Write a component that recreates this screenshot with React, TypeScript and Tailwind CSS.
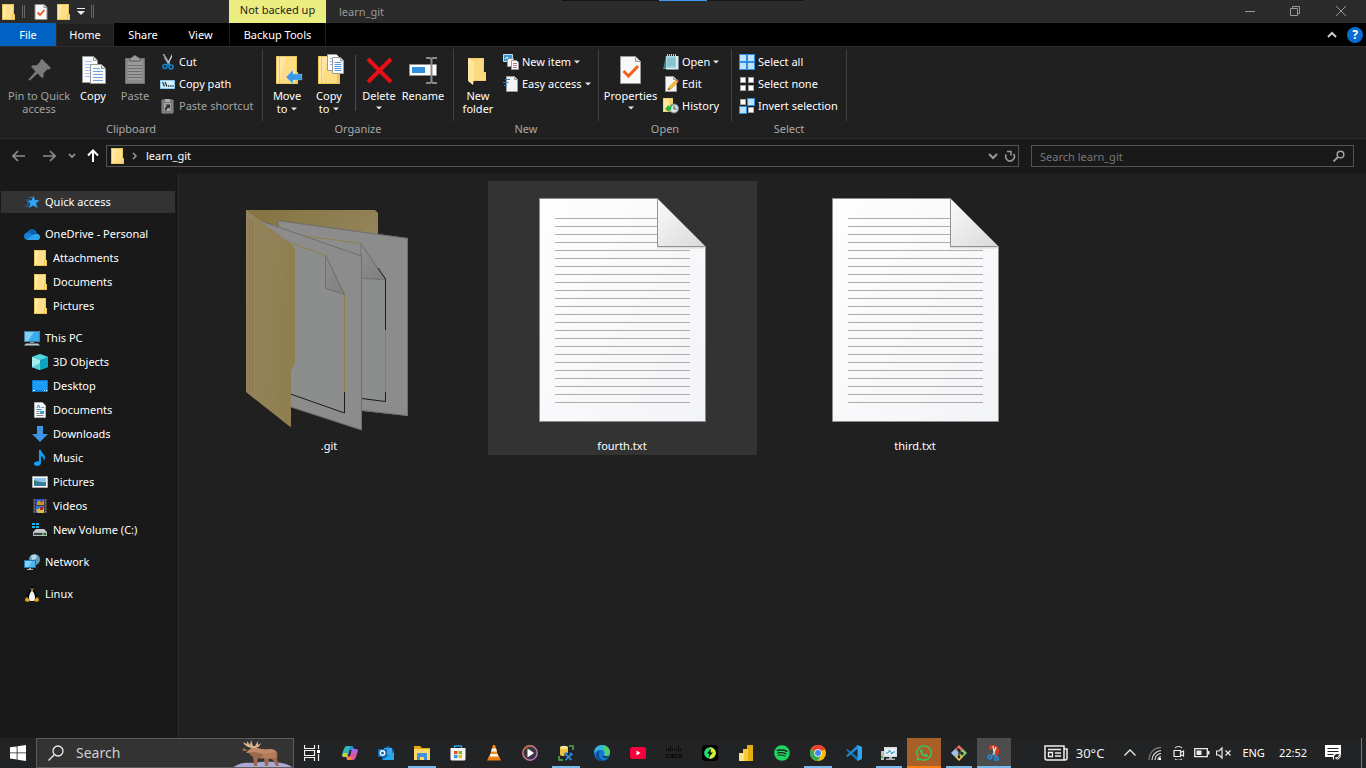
import React from 'react';
import { FaSpotify, FaWhatsapp } from 'react-icons/fa';

type IconProps = { className?: string };
type P = { children?: React.ReactNode; size?: number; box?: string; className?: string };

function Svg({ children, size = 16, box, className = '' }: P) {
  return (
    <svg width={size} height={size} viewBox={box ?? `0 0 ${size} ${size}`} className={`block shrink-0 ${className}`} aria-hidden="true">
      {children}
    </svg>
  );
}

/* ---------- small 16px icons ---------- */

const FolderIcon = ({ className }: IconProps) => (
  <Svg className={className}>
    <path d="M2 0h12v10h1v6H2z" fill="#eac65a" />
    <path d="M3 1h10v9l-1 1v4H3z" fill="#ffe08a" />
    <path d="M3 1h4L4 15H3z" fill="#ffe9a8" />
    <path d="M13 11h1v4h-1z" fill="#ffe08a" />
  </Svg>
);

const CheckDoc = () => (
  <Svg>
    <path d="M2 .5h9l3 3v12H2z" fill="#f7f7f7" stroke="#8f8f8f" />
    <path d="M11 .5v3h3" fill="#ddd" stroke="#8f8f8f" />
    <path d="M4.500 8.500l2.500 2.500 4.500-5" fill="none" stroke="#e8561d" strokeWidth="1.800" />
  </Svg>
);

const CutIcon = () => (
  <Svg>
    <path d="M3 0l1 0 6 10-1.500 1zM4 4l5 6" fill="#a8b0b6" stroke="#a8b0b6" strokeWidth=".6" />
    <path d="M12 0L7 10l1 1 4-8z" fill="#d6dade" />
    <circle cx="5" cy="12.500" r="2" fill="none" stroke="#1487d4" strokeWidth="1.500" />
    <circle cx="11" cy="13" r="2" fill="none" stroke="#1487d4" strokeWidth="1.500" />
    <path d="M6.500 11L8 9.500l2 2" fill="none" stroke="#1487d4" strokeWidth="1.300" />
  </Svg>
);

const PathIcon = () => (
  <Svg>
    <path d="M.5 4.500h14v8H.5z" fill="#d5eefb" stroke="#8fc8ea" />
    <path d="M2.500 6l2 4.500M5 6l2 4.500" stroke="#15313f" strokeWidth="1.200" />
    <path d="M8 10h1.300M10.200 10h1.300M12.400 10h1.200" stroke="#15313f" strokeWidth="1.400" />
  </Svg>
);

const PasteShortcutIcon = () => (
  <Svg>
    <path d="M2 2h11v13H2z" fill="#777" stroke="#8d8d8d" />
    <path d="M5 1h5v3H5z" fill="#aaa" />
    <path d="M4 5h7v8H4z" fill="#a5a5a5" />
    <path d="M5 12.500c-.5-2 .5-4 2-4.500L5.500 6.500H10V11L8.500 9.500C7 10 6.500 11 6.500 12.500z" fill="#2a2a2a" />
  </Svg>
);

const NewItemIcon = () => (
  <Svg>
    <path d="M.5.500h9v7h-9z" fill="#3d9ad1" stroke="#b5dff4" />
    <path d="M2 5l2-2 3 3" fill="none" stroke="#dff" />
    <path d="M4.500 4.500h6v8h-6z" fill="#f5f5f5" stroke="#9a9a9a" />
    <path d="M8.500 6.500h5l2 2v7h-7z" fill="#fff" stroke="#9a9a9a" />
    <path d="M10 9.500h4M10 11.500h4M10 13.500h4" stroke="#e36a7a" />
    <path d="M12 9.500h2M12 13.500h2" stroke="#5794d8" />
  </Svg>
);

const EasyAccessIcon = () => (
  <Svg>
    <path d="M3.500.500h8l3 3v12h-11z" fill="#f4f4f4" stroke="#9a9a9a" />
    <path d="M11.500.500v3h3" fill="#ccc" stroke="#9a9a9a" />
    <path d="M2 3.500h5M0 6.500h5.500M1 9.500h3" stroke="#2383cf" strokeWidth="1.200" />
  </Svg>
);

const NotepadIcon = () => (
  <Svg>
    <path d="M3 2h12v12H2z" fill="#9fd3df" />
    <path d="M3 2L0 15h3z" fill="#3f7f8c" />
    <path d="M13 2h2.500v13.500h-12L2 14h11z" fill="#d9eef2" />
    <path d="M4.500 5h8M4.300 7h8M4 9h8.500M4 11h8.500" stroke="#6fb1bf" />
    <path d="M4.500 0v3M6.500 0v3M8.500 0v3M10.500 0v3M12.500 0v3" stroke="#c8d4d6" />
  </Svg>
);

const EditIcon = () => (
  <Svg>
    <path d="M2.500.500h8l3 3v12h-11z" fill="#f4f4f4" stroke="#9a9a9a" />
    <path d="M10.500.500v3h3" fill="#ccc" stroke="#9a9a9a" />
    <path d="M5 14l1-3 7-7 2 2-7 7z" fill="#f5bd35" stroke="#c98a18" strokeWidth=".5" />
    <path d="M13 4l1-1 2 2-1 1z" fill="#e0566a" />
    <path d="M5 14l.8-2 1.300 1.200z" fill="#333" />
  </Svg>
);

const HistoryIcon = () => (
  <Svg>
    <path d="M0 0h10v14H0z" fill="#f3d36a" />
    <path d="M1 1h5v12H1z" fill="#ffe79a" />
    <circle cx="11" cy="10.500" r="4.500" fill="#dadfe2" stroke="#7b8489" />
    <path d="M11 7.500v3.500h2.500" fill="none" stroke="#555" />
    <path d="M2 11l3.500-4 1 2.500c1-2 2-3 4-3-2 1.500-2.500 3-2.500 5.500l-2 0 1 2.500z" fill="#27b03e" />
  </Svg>
);

type Cell = 'on' | 'off';
const SelectGrid = ({ cells, filled }: { cells: Cell[]; filled?: boolean }) => (
  <Svg>
    {filled && <path d="M0 0h16v16H0z" fill="#2f8fe0" />}
    {cells.map((c, i) => {
      const x = (i % 2) * 8;
      const y = Math.floor(i / 2) * 8;
      return c === 'on' ? (
        <g key={i}>
          <rect x={x} y={y} width="8" height="8" fill="#2f8fe0" />
          <rect x={x + 1} y={y + 1} width="6" height="6" fill="#bfe3fb" />
        </g>
      ) : (
        <g key={i}>
          <rect x={x + 1} y={y + 1} width="6" height="6" fill="#a5a5a5" />
          <rect x={x + 2} y={y + 2} width="4" height="4" fill="#fff" />
        </g>
      );
    })}
  </Svg>
);

/* ---------- 32px ribbon icons ---------- */

const PinBig = () => (
  <Svg size={32}>
    <path d="M19 5l9 9-2 1.500-1.500-.3-4 4c.5 2.200 0 4-1.200 5l-4.800-4.700L7 26.500l-1.500-.5 0-.5 7-8L8 12.500c1.500-1.300 3.500-1.500 5.500-1l4-4-.5-1z" fill="#7a7a7a" />
  </Svg>
);

const page = (x: number, y: number) => (
  <g transform={`translate(${x} ${y})`}>
    <path d="M.5.500h11l4 4v15H.5z" fill="#fbfbfb" stroke="#9a9a9a" />
    <path d="M11.500.500v4h4" fill="#ddd" stroke="#9a9a9a" />
    <path d="M3 4.500h7M3 7.500h10M3 10.500h10M3 13.500h10M3 16.500h10" stroke="#6ea4ea" />
  </g>
);

const CopyBig = () => (
  <Svg size={32}>
    <g transform="translate(5 2)">
      <path d="M.5.500h11l4 4v22H.5z" fill="#fbfbfb" stroke="#9a9a9a" />
      <path d="M11.500.500v4h4" fill="#ddd" stroke="#9a9a9a" />
      <path d="M3 5.500h7M3 8.500h10M3 11.500h5M3 14.500h5M3 17.500h5M3 20.500h5" stroke="#a5c6f2" />
    </g>
    {page(13, 10)}
  </Svg>
);

const PasteBig = () => (
  <Svg size={32}>
    <path d="M6.500 4.500h19v25h-19z" fill="#8a8a8a" stroke="#707070" />
    <path d="M11 5c0-2 3-1 4-3.500h2c1 2.500 4 1.500 4 3.500v2H11z" fill="#9c9c9c" stroke="#606060" />
    <path d="M9 8h14v18H9z" fill="#9a9a9a" />
    <path d="M9 11.500h14M9 14.500h14M9 17.500h14M9 20.500h14M9 23.500h14" stroke="#6f6f6f" />
  </Svg>
);

const FolderShape = () => (
  <>
    <path d="M5 2h21v16h1v12H5z" fill="#eac65a" />
    <path d="M6 3h19v26H6z" fill="#fddc84" />
    <path d="M6 3h9L8 29H6z" fill="#ffe7a3" />
    <path d="M8.500 3v26M24.500 19v10" stroke="#eec963" />
  </>
);

const MoveBig = () => (
  <Svg size={32}>
    <FolderShape />
    <path d="M15 23l7-7v4h9v6h-9v4z" fill="#3a99e8" stroke="#fff" strokeOpacity=".4" strokeWidth=".5" />
  </Svg>
);

const CopyToBig = () => (
  <Svg size={32}>
    <FolderShape />
    <g transform="translate(14 0)">
      <path d="M.5.500h9l3 3v13H.5z" fill="#fbfbfb" stroke="#9a9a9a" />
      <path d="M3 4.500h6M3 7.500h7M3 10.500h7" stroke="#8ab6ee" />
    </g>
    <g transform="translate(19 3)">
      <path d="M.5.500h8l3 3v13H.5z" fill="#fbfbfb" stroke="#9a9a9a" />
      <path d="M8.500.500v3h3" fill="#ddd" stroke="#9a9a9a" />
      <path d="M2.500 5.500h7M2.500 7.500h7M2.500 9.500h7M2.500 11.500h7M2.500 13.500h7" stroke="#5b97e3" />
    </g>
  </Svg>
);

const DeleteBig = () => (
  <Svg size={32}>
    <path d="M5 5l23 23M28 5L5 28" stroke="#e60f17" strokeWidth="4" />
  </Svg>
);

const RenameBig = () => (
  <Svg size={32}>
    <path d="M2.500 10.500h27v11h-27z" fill="#fff" stroke="#8f8f8f" />
    <path d="M5 13h13v6H5z" fill="#2f8fe0" />
    <path d="M19 4h4l1.500 1L26 4h4M24.500 5v23M19 29h4l1.500-1L26 29h4" fill="none" stroke="#8a8a8a" strokeWidth="2" />
  </Svg>
);

const NewFolderBig = () => (
  <Svg size={32}>
    <path d="M6 4h16v14h2v9H6z" fill="#f4cd6c" />
    <path d="M6 4l6 3v17l-1 7-5-4z" fill="#ffe6a0" />
    <path d="M12 5h9v13l3 2v6H12z" fill="#fbd97f" />
  </Svg>
);

const PropertiesBig = () => (
  <Svg size={32}>
    <path d="M5.500 2.500h15l5 5v22h-20z" fill="#f8f8f8" stroke="#9a9a9a" />
    <path d="M20.500 2.500v5h5" fill="#ddd" stroke="#9a9a9a" />
    <path d="M8.500 17l5 5 9.500-10" fill="none" stroke="#f0601e" strokeWidth="3" />
  </Svg>
);

/* ---------- navigation icons ---------- */

const StarIcon = () => (
  <Svg>
    <path d="M9.500 1.500L11 6l4.500.2-3.500 3 1.500 4.800-4.500-2.500L5 14l1.300-4.700L3 7l4.500-.8z" fill="#2fa4f5" />
    <path d="M5 3.500h3M2.500 6h3M3 9.500h2M1.500 12h3.500" stroke="#1679c8" strokeWidth="1.200" />
  </Svg>
);
const CloudIcon = () => (
  <Svg>
    <path d="M3 7c1-3 3-4 5-4s4 1 5 4l-5 3z" fill="#0f5fb4" />
    <path d="M0 10c0-2 2-4 4.500-3.500L12 10l-6 4H4c-2 0-4-1-4-4z" fill="#1780d8" />
    <path d="M3 13l8-5c3-1 5 .5 5 3s-1.500 3-3 3H4z" fill="#2aa6ec" />
  </Svg>
);
const PcIcon = () => (
  <Svg>
    <path d="M0 1h16v11H0z" fill="#4b7d9b" />
    <path d="M1 2h14v9H1z" fill="#3bacee" />
    <path d="M1 2h9L4 11H1z" fill="#7fd0f8" />
    <path d="M6 12h4v1H6z" fill="#7b95a3" />
    <path d="M2 13.500h12l2 2H0z" fill="#b9cdd8" />
  </Svg>
);
const CubeIcon = () => (
  <Svg>
    <path d="M0 3l8-3 8 3v10l-8 3-8-3z" fill="#20b8cf" />
    <path d="M0 3l8 3v10l-8-3z" fill="#a5ecef" />
    <path d="M8 6l8-3v10l-8 3z" fill="#10a4c2" />
    <path d="M0 3l8-3 8 3-8 3z" fill="#56d2dd" />
    <path d="M0 13l8-4v7z" fill="#53cfd8" />
  </Svg>
);
const DesktopIcon = () => (
  <Svg>
    <path d="M0 2h16v12H0z" fill="#0a79cf" />
    <path d="M1 3h14v9H1z" fill="#1b9df5" />
    <path d="M1 12.500h2M12 12.500h1M14 12.500h1" stroke="#fff" />
  </Svg>
);
const DocIcon = () => (
  <Svg>
    <path d="M2.500.500h8l3 3v12h-11z" fill="#f8f8f8" stroke="#b0b0b0" />
    <path d="M5 6l1.500-3L8 6M4.500 7.500h5" fill="none" stroke="#2686cf" />
    <path d="M9.500 5.500h2.500M4.500 9.500h3M4.500 11.500h3M4.500 13.500h7" stroke="#888" />
    <path d="M8 9h4v3H8z" fill="#3f9cc5" />
  </Svg>
);
const DownIcon = () => (
  <Svg>
    <path d="M5 0h6v8h5l-8 8-8-8h5z" fill="#3d94e4" />
  </Svg>
);
const MusicIcon = () => (
  <Svg>
    <path d="M7 0h2c0 3 4 4 4 8 0 1-.5 2-1.500 3 .5-3-.5-4-2.500-5v6.500C9 15 7 16 5 16c-2 0-3-1-3-2.500C2 12 4 11 7 11.300z" fill="#12a0f7" />
  </Svg>
);
const PictureIcon = () => (
  <Svg>
    <path d="M.5 2.500h15v11H.5z" fill="#fff" stroke="#aaa" />
    <path d="M2 4h12v8H2z" fill="#8dc3ee" />
    <path d="M2 6c4 1 6 3 12 2v4H2z" fill="#3a7e72" />
    <path d="M2 10c4-1 8-1 12 0v2H2z" fill="#3578ac" />
  </Svg>
);
const VideoIcon = () => (
  <Svg>
    <path d="M1 1h14v14H1z" fill="#3d3d3d" />
    <path d="M2.500 1v14M13.500 1v14" stroke="#888" strokeDasharray="1.500 1.500" />
    <path d="M4 1h8v6H4z" fill="#3154c4" />
    <path d="M5 4l3-2 1 3 3-3v5H5z" fill="#d59420" />
    <path d="M4 8h8v7H4z" fill="#3b78e0" />
    <path d="M4 12l4-2 4 1v4H6z" fill="#e4b93d" />
    <path d="M8 9h3v3H8z" fill="#a52a2a" />
  </Svg>
);
const DriveIcon = () => (
  <Svg>
    <path d="M0 1h3v2H0zM4 1h3v2H4zM0 4h3v2H0zM4 4h3v2H4z" fill="#14b2ea" />
    <path d="M4 7h8l3 3v4H1v-4z" fill="#c8ccce" />
    <path d="M1.500 10.500h13v3h-13z" fill="#3c4144" stroke="#b4b8ba" />
    <path d="M10 12h2.500" stroke="#35e04b" strokeWidth="1.500" />
  </Svg>
);
const NetworkIcon = () => (
  <Svg>
    <circle cx="10.500" cy="5.500" r="5.500" fill="#5f9dba" />
    <path d="M7 2c2-2 5-1 6 0l-1 3-4 1z" fill="#b4d8e6" />
    <path d="M0 6h12v8H0z" fill="#2476ae" />
    <path d="M1 7h10v6H1z" fill="#4db7f2" />
    <path d="M1 7h7l-4 6H1z" fill="#84d1f9" />
    <path d="M5 14h2v1h2v1H3v-1h2z" fill="#9bb5c2" />
  </Svg>
);
const LinuxIcon = () => (
  <Svg>
    <path d="M8 0c2 0 2.600 1.500 2.600 4 0 2 3.400 4 3.400 8 0 2-3 3.500-6 3.500S2 14 2 12c0-4 3.400-6 3.400-8C5.400 1.500 6 0 8 0z" fill="#050505" />
    <path d="M8 5c1.500 0 3 4 3 7s-1 3-3 3-3 0-3-3 1.500-7 3-7z" fill="#f5f5f5" />
    <path d="M6.500 3.800L8 3.200l1.800.6L8 5.300z" fill="#eab02a" />
    <path d="M3 11l3 3.500-1.500 1.500L1 15c0-2 .5-3 2-4zM13 11l-3 3.500 1.500 1.500 3.500-1c0-2-.5-3-2-4z" fill="#e0a11c" />
    <path d="M6.500 2.500h.8M8.700 2.500h.8" stroke="#ddd" />
  </Svg>
);

/* ---------- large file art ---------- */

const RULES = Array.from({ length: 24 }, (_, i) => 36.5 + i * 8);

const TextFileArt = () => (
  <Svg size={256}>
    <defs>
      <linearGradient id="sheet" x1="0" y1="0" x2="1" y2="1">
        <stop offset="0" stopColor="#fefefe" />
        <stop offset="1" stopColor="#f3f4f7" />
      </linearGradient>
      <linearGradient id="fold" x1="0" y1="0" x2="1" y2="1">
        <stop offset="0" stopColor="#fafafa" />
        <stop offset="1" stopColor="#d9d9d9" />
      </linearGradient>
    </defs>
    <path d="M45.500 16.500h118l48 48v175h-166z" fill="url(#sheet)" stroke="#8c8c8c" />
    {RULES.map((y, i) => (
      <path key={y} d={`M61 ${y}H${i < 4 ? 163 : 196}`} stroke="#ababab" />
    ))}
    <path d="M163 65.500h47" stroke="#dcdcdc" strokeWidth="2" />
    <path d="M163.500 16.500v48h48z" fill="url(#fold)" stroke="#929292" />
  </Svg>
);

const GitFolderArt = () => (
  <Svg size={256}>
    <defs>
      <linearGradient id="cover" x1="0" y1="0" x2="1" y2="0.300">
        <stop offset="0" stopColor="#94845f" />
        <stop offset="1" stopColor="#8f7f4e" />
      </linearGradient>
      <linearGradient id="back" x1="0" y1="0" x2="1" y2="0.400">
        <stop offset="0" stopColor="#84723f" />
        <stop offset="1" stopColor="#94845a" />
      </linearGradient>
      <linearGradient id="curl" x1="0" y1="0" x2="1" y2="1">
        <stop offset="0" stopColor="#8f8f8f" />
        <stop offset="1" stopColor="#7e7e7e" />
      </linearGradient>
    </defs>
    <path d="M45 28h129l3 3v50H45z" fill="url(#back)" />
    <path d="M77 39l130 17v178l-90-10z" fill="#8c8c8c" />
    <path d="M77 44v-5.500L206.500 56.500v177l-45-5" fill="none" stroke="#6d6d6d" />
    <path d="M108 55l52 6.500 24.500 35V219l-24-3z" fill="#8b8e8d" />
    <path d="M104 54l56 7.500 24 35" fill="none" stroke="#90804a" />
    <path d="M160 61.500v34.500l24.500 2z" fill="url(#curl)" stroke="#707070" />
    <path d="M177 86l7.500 11v51M184.500 210v9.500l-24-3" fill="none" stroke="#1b1b1b" />
    <path d="M184.500 148v62" stroke="#8f7f4e" />
    <path d="M60 39l100.500 35v174L90 225z" fill="#8c8c8c" />
    <path d="M60 39l100.500 35v174L90 225" fill="none" stroke="#6d6d6d" />
    <path d="M83 58l41.500 15 19 38v120L90 213z" fill="#8b8e8d" />
    <path d="M83 58.500l41.500 15 19 38v99" fill="none" stroke="#90804a" />
    <path d="M143.500 210v21l-54-19" fill="none" stroke="#1b1b1b" />
    <path d="M124.500 73.500v33l19 6z" fill="url(#curl)" stroke="#707070" />
    <path d="M45 28l45 34q4 3 4 8v111l-4 8v56l-2-1-43-34z" fill="url(#cover)" />
    <path d="M48.500 37v172M51.500 39v171" stroke="#8c7747" />
  </Svg>
);

/* ---------- building blocks ---------- */

const Caret = () => (
  <Svg size={6}>
    <path d="M0 1.500h6L3 4.500z" fill="#e6e6e6" />
  </Svg>
);

type BigProps = { icon: React.ReactNode; lines: string[]; width: string; caret?: boolean; muted?: boolean };

function BigButton({ icon, lines, width, caret, muted }: BigProps) {
  return (
    <button type="button" className={`flex shrink-0 flex-col items-center pt-[7px] ${width} ${muted ? 'text-[#a3a3a3]' : 'text-white'}`}>
      {icon}
      <span className="mt-[3px] flex flex-col items-center leading-[13px] whitespace-nowrap">
        {lines.map((l, i) => (
          <span key={l} className="flex items-center gap-1">
            {l}
            {caret && lines.length > 1 && i === lines.length - 1 && <Caret />}
          </span>
        ))}
        {caret && lines.length === 1 && <span className="flex h-3 items-center"><Caret /></span>}
      </span>
    </button>
  );
}

type SmallProps = { icon: React.ReactNode; label: string; caret?: boolean; muted?: boolean };

function SmallButton({ icon, label, caret, muted }: SmallProps) {
  return (
    <button type="button" className={`flex h-[22px] items-center gap-[3px] whitespace-nowrap ${muted ? 'text-[#a3a3a3]' : 'text-white'}`}>
      {icon}
      <span>{label}</span>
      {caret && <Caret />}
    </button>
  );
}

function Group({ label, width, children }: { label: string; width: string; children: React.ReactNode }) {
  return (
    <section aria-label={label} className={`flex shrink-0 ${width}`}>
      <div className="flex min-w-0 flex-1 flex-col">
        <div className="flex h-[74px]">{children}</div>
        <div className="text-center leading-4 text-[#a8a8a8]">{label}</div>
      </div>
      <div className="mt-0.5 h-[72px] w-px bg-[#414141]" />
    </section>
  );
}

const Column = ({ children }: { children: React.ReactNode }) => <div className="ml-1 flex flex-col pt-1">{children}</div>;

const Grip = () => <span className="h-[13px] w-[3px] border-x border-[#666]" />;

type NavEntry = { label: string; icon: React.ReactNode };
type NavSection = NavEntry & { items: NavEntry[]; current?: boolean };

const NAV: NavSection[] = [
  { label: 'Quick access', icon: <StarIcon />, items: [], current: true },
  {
    label: 'OneDrive - Personal',
    icon: <CloudIcon />,
    items: [
      { label: 'Attachments', icon: <FolderIcon /> },
      { label: 'Documents', icon: <FolderIcon /> },
      { label: 'Pictures', icon: <FolderIcon /> },
    ],
  },
  {
    label: 'This PC',
    icon: <PcIcon />,
    items: [
      { label: '3D Objects', icon: <CubeIcon /> },
      { label: 'Desktop', icon: <DesktopIcon /> },
      { label: 'Documents', icon: <DocIcon /> },
      { label: 'Downloads', icon: <DownIcon /> },
      { label: 'Music', icon: <MusicIcon /> },
      { label: 'Pictures', icon: <PictureIcon /> },
      { label: 'Videos', icon: <VideoIcon /> },
      { label: 'New Volume (C:)', icon: <DriveIcon /> },
    ],
  },
  { label: 'Network', icon: <NetworkIcon />, items: [] },
  { label: 'Linux', icon: <LinuxIcon />, items: [] },
];

/* ---------- taskbar ---------- */

const APPS: { name: string; icon: React.ReactNode; state?: 'open' | 'alert' | 'active'; narrow?: boolean }[] = [
  {
    name: 'Copilot',
    icon: (
      <Svg>
        <path d="M5 1h5c1 0 1.500 1 2 3L9 5 6 12H2c-2 0-2-2-1-5s2-6 4-6z" fill="#2a8fe0" />
        <path d="M5 1h3L4 12H2c-2 0-2-2-1-5s2-6 4-6z" fill="#35b9a8" />
        <path d="M1 8h5l-1 4H2c-2 0-2-2-1-4z" fill="#c7cf3d" />
        <path d="M11 15H6c-1 0-1.500-1-2-3l3-1 3-7h4c2 0 2 2 1 5s-2 6-4 6z" fill="#e0559b" />
        <path d="M10 4h4c2 0 2 2 1 4H9z" fill="#a06be0" />
        <path d="M5 12l5 0-1 3H6c-1 0-1.500-2-1-3z" fill="#f08a3c" />
        <path d="M8 5h1.500L8 11H6z" fill="#202020" />
      </Svg>
    ),
  },
  {
    name: 'Outlook',
    icon: (
      <Svg>
        <path d="M4 5l6-4 6 4v9c0 1-.5 1-1 1H5c-1 0-1-1-1-1z" fill="#1066b5" />
        <path d="M6 3h8v7H6z" fill="#39a5ea" />
        <path d="M4 15l12-8v7c0 1-.5 1-1 1z" fill="#28a8ea" />
        <path d="M0 4h9v8H0z" fill="#0f6cbd" />
        <ellipse cx="4.500" cy="8" rx="2.200" ry="2.300" fill="none" stroke="#fff" strokeWidth="1.400" />
      </Svg>
    ),
  },
  {
    name: 'File Explorer',
    state: 'open',
    icon: (
      <Svg>
        <path d="M0 1h6l2 2h8v6H0z" fill="#e8a812" />
        <path d="M0 4h16v11H0z" fill="#ffd968" />
        <path d="M3 15V9c0-1 0-1 1-1h8c1 0 1 0 1 1v6h-3v-3H6v3z" fill="#3f92db" />
      </Svg>
    ),
  },
  {
    name: 'Microsoft Store',
    icon: (
      <Svg>
        <path d="M4.500 4V1h7v3" fill="none" stroke="#28a0e0" strokeWidth="1.300" />
        <path d="M.5 3h15v11q0 1.500-1.500 1.500H2Q.5 15.500.5 14z" fill="#f5f5f5" />
        <path d="M4 6h3.500v3.200H4z" fill="#e94f26" />
        <path d="M8.500 6H12v3.200H8.500z" fill="#7db81c" />
        <path d="M4 10h3.500v3.200H4z" fill="#20a0e6" />
        <path d="M8.500 10H12v3.200H8.500z" fill="#fab710" />
      </Svg>
    ),
  },
  {
    name: 'VLC media player',
    icon: (
      <Svg>
        <path d="M3 11h10l2 4.500H1z" fill="#ee7d10" />
        <path d="M7 0h2l4 13H3z" fill="#f58a1a" />
        <path d="M6 3.500h4l1 3H5zM4.300 9h7.400l.8 2.500h-9z" fill="#f4f4f4" />
      </Svg>
    ),
  },
  {
    name: 'Media Player',
    icon: (
      <Svg>
        <defs>
          <linearGradient id="ring" x1="0" y1="0" x2="1" y2="1">
            <stop offset="0" stopColor="#f2793a" />
            <stop offset="1" stopColor="#a878e8" />
          </linearGradient>
        </defs>
        <circle cx="8" cy="8" r="7.200" fill="#3b3540" stroke="url(#ring)" strokeWidth="1.500" />
        <path d="M5.500 3.500l6.500 4.500-6.500 4.500z" fill="#fff" />
      </Svg>
    ),
  },
  {
    name: 'Database Tools',
    state: 'open',
    icon: (
      <Svg>
        <path d="M2 2.500v7c0 2 8 2 8 0v-7z" fill="#f0c13a" />
        <ellipse cx="6" cy="2.500" rx="4" ry="1.800" fill="#ffe78b" />
        <path d="M11 1h4v4M1 11v4h4" fill="none" stroke="#4caf50" strokeWidth="1.500" />
        <path d="M6.500 8h8v8h-8z" fill="#222" />
        <path d="M7.500 9l6 6M13.500 9l-6 6M6.500 9.500l2.500-2M12 8l2.500 2" stroke="#2f86cf" strokeWidth="1.800" />
      </Svg>
    ),
  },
  {
    name: 'Microsoft Edge',
    icon: (
      <Svg>
        <circle cx="8" cy="8" r="8" fill="#1479d0" />
        <path d="M0 8c0-5 4-8 8-8 5 0 8 4 8 7 0 3-2 4-4 4-2 0-2.500-1-2-2 1-2-.5-4-3-4C4 5 1 6 0 8z" fill="#35b6d8" />
        <path d="M9 .3c5 1 7 4 7 6.700 0 3-2 4-4 4l-1-4z" fill="#54cf66" />
        <path d="M5 10c0 3 3 6 7 5-3 2-8 1-10-3-1-3 1-6 5-7-1.500 1-2 3-2 5z" fill="#0b4d9c" />
        <path d="M9 8c-1 2 0 4 5.500 3.500l-.5 1-3 .2c-2 0-3-1.700-2-4.700z" fill="#202020" />
      </Svg>
    ),
  },
  {
    name: 'YouTube',
    icon: (
      <Svg>
        <rect y="2" width="16" height="12" rx="2.500" fill="#f7003d" />
        <path d="M6.500 5.500v5l4-2.500z" fill="#fff" />
      </Svg>
    ),
  },
  {
    name: 'Cisco',
    icon: (
      <Svg>
        <path d="M.5 4v2M2.500 3v3M4.500 1v6M6.500 3v3M8.500 4v2M10.500 3v3M12.500 1v6M14.500 3v3" stroke="#0b0b0b" />
        <path d="M3 9.500H.8v3H3M4.500 9v4M8 9.500H6v1.500h2v1.500H6M12 9.500h-2v3h2M13.500 9.500h2v3h-2z" fill="none" stroke="#0b0b0b" strokeWidth="1.100" />
      </Svg>
    ),
  },
  {
    name: 'Battery Saver',
    icon: (
      <Svg>
        <rect width="16" height="16" rx="3.500" fill="#000" />
        <circle cx="8" cy="8" r="5.800" fill="#25e07a" />
        <path d="M8 2.200a5.800 5.800 0 010 11.600z" fill="#d7ef35" />
        <path d="M9 3.500L5 8.500h2.500L6.500 12.500l4.500-5H8.500z" fill="#06120a" />
      </Svg>
    ),
  },
  {
    name: 'Power BI',
    icon: (
      <Svg>
        <path d="M9 0h6v16H9z" fill="#e6ad10" />
        <path d="M5 4h5v12H5z" fill="#f4cb3d" />
        <path d="M1 8h5v8H1z" fill="#fbe388" />
      </Svg>
    ),
  },
  { name: 'Spotify', icon: <FaSpotify size={16} color="#1ed760" /> },
  {
    name: 'Google Chrome',
    state: 'open',
    icon: (
      <Svg>
        <circle cx="8" cy="8" r="8" fill="#fbbc05" />
        <path d="M8 8L1 4a8 8 0 0114 0z" fill="#ea4335" />
        <path d="M8 8L1 4a8 8 0 006.500 12l3.500-6z" fill="#34a853" />
        <path d="M8 4.500h7.200A8 8 0 008 0z" fill="#ea4335" />
        <circle cx="8" cy="8" r="3.800" fill="#fff" />
        <circle cx="8" cy="8" r="3" fill="#4285f4" />
      </Svg>
    ),
  },
  {
    name: 'Visual Studio Code',
    icon: (
      <Svg>
        <path d="M0 5l1.500-1L12 12.500V16l-1-.5z" fill="#1173b8" />
        <path d="M0 11l1.500 1L12 3.500V0l-1 .5z" fill="#1c8ed8" />
        <path d="M11.500 0L16 2v12l-4.500 2z" fill="#2ea5f0" />
      </Svg>
    ),
  },
  {
    name: 'System Monitor',
    state: 'open',
    narrow: true,
    icon: (
      <Svg>
        <path d="M3 2h13v10H3z" fill="#d8dcdf" />
        <path d="M4.500 3.500h10v7h-10z" fill="#eaf6fc" />
        <path d="M5 8h2l1.500-3L11 9l1-2h2" fill="none" stroke="#2787bd" />
        <path d="M0 6h3v9H0z" fill="#b9bdc0" />
        <path d="M0 11h2v2H0z" fill="#46b84a" />
        <path d="M8 12h3v1.500h3V15H5v-1.500h3z" fill="#aeb3b6" />
      </Svg>
    ),
  },
  { name: 'WhatsApp', state: 'alert', narrow: true, icon: <FaWhatsapp size={18} color="#25d366" /> },
  {
    name: 'Git Bash',
    state: 'open',
    narrow: true,
    icon: (
      <Svg>
        <path d="M8 0l4 4-4 4-4-4z" fill="#f26d6d" />
        <path d="M4 4l4 4-4 4-4-4z" fill="#9fc4ef" />
        <path d="M12 4l4 4-4 4-4-4z" fill="#80cf72" />
        <path d="M8 8l4 4-4 4-4-4z" fill="#f2d35f" />
        <path d="M6 3l5 5.500M8 5v8" stroke="#252525" strokeWidth="1.200" />
        <circle cx="11" cy="8.500" r="1.500" fill="#252525" />
        <circle cx="8" cy="12" r="1.500" fill="#252525" />
        <circle cx="8" cy="5" r="1.300" fill="#252525" />
      </Svg>
    ),
  },
  {
    name: 'Snipping Tool',
    state: 'active',
    narrow: true,
    icon: (
      <Svg>
        <path d="M3 1c4-2 10-1 10 5 0 3-2 6-5 6V8c2 0 2-4-1-4L3 5z" fill="#d63a1e" />
        <path d="M7 1l1.500 9M10 2L7 10" stroke="#e3e6e8" strokeWidth="1.300" />
        <circle cx="4" cy="12" r="1.800" fill="none" stroke="#1f90e0" strokeWidth="1.400" />
        <circle cx="10.500" cy="13.500" r="1.800" fill="none" stroke="#1f90e0" strokeWidth="1.400" />
        <path d="M6 11l2-1.500 2 2" fill="none" stroke="#1f90e0" strokeWidth="1.400" />
      </Svg>
    ),
  },
];

function AppButton({ name, icon, state, narrow }: (typeof APPS)[number]) {
  const filled = state === 'alert' || state === 'active';
  const bg = state === 'alert' ? 'bg-[#a85f28]' : state === 'active' ? 'bg-[#4d4d4d]' : '';
  const bar = state === 'alert' ? 'bg-[#f97c0c]' : state ? 'bg-[#76b9ed]' : '';
  return (
    <div className={`flex shrink-0 ${narrow ? 'w-[35px]' : 'w-9 justify-center'}`}>
      <button type="button" aria-label={name} className={`flex h-full flex-col items-center ${filled ? 'w-[34px]' : narrow ? 'ml-1 w-[26px]' : 'w-[28px]'} ${bg}`}>
        <span className="flex flex-1 items-center">{icon}</span>
        <span className={`-mt-0.5 h-0.5 w-full ${bar}`} />
      </button>
    </div>
  );
}

const Moose = () => (
  <svg width="60" height="28" viewBox="0 0 60 28" className="block" aria-hidden="true">
    <path d="M1 28c4-4 12-5 20-4 10-2 30-2 38 4z" fill="#a9a8d6" />
    <path d="M15 12c2-3 6-4 9-3 4 1 8 2 12 1 4 0 7 1 8 4 1 2 0 5 0 6l2 7h-3l-3-6-4-2-1 8h-3l-1-8c-2 1-4 1-6 0l-1 8h-3l-1-9c-3-2-4-4-5-6l-4 0c-2 0-2-2 0-3z" fill="#9c6a4a" />
    <path d="M15 12c2-3 6-4 9-3 4 1 8 2 12 1 4 0 7 1 8 4-5-1-9 1-14 1s-8-3-11-2l-4 1c-2 0-2-1 0-2z" fill="#c08a68" />
    <path d="M30 15c5 0 9-2 13-1 1 2 0 4-1 5-4 1-9 1-13 0z" fill="#b07c5b" />
    <path d="M21 9c-5 0-9-2-11-6l4 2 0-3 3 4 1-5 2 6 2 0 3-5 0 4 3-2c-1 3-3 5-7 5z" fill="#d9b58d" />
  </svg>
);

const chevron = 'fill-none stroke-[#999]';

export default function App() {
  return (
    <div className="flex min-h-screen flex-col bg-[#191919] font-['Noto_Sans','Open_Sans',sans-serif] text-[11px] leading-4 text-white">
      <header className="relative flex h-[23px] items-stretch bg-[#2b2b2b]">
        <div className="flex w-[229px] items-center">
          <FolderIcon />
          <span className="ml-1.5 flex"><Grip /></span>
          <span className="flex items-center gap-1.5 pl-2">
            <button type="button" aria-label="Properties"><CheckDoc /></button>
            <button type="button" aria-label="New folder"><FolderIcon /></button>
            <button type="button" aria-label="Customize Quick Access Toolbar">
              <Svg size={8}><path d="M0 .5h8" stroke="#eee" /><path d="M0 3h8L4 7z" fill="#eee" /></Svg>
            </button>
            <Grip />
          </span>
        </div>
        <div className="w-[97px] bg-[#eced80] pt-0.5 text-center text-[#1d1d1d]">Not backed up</div>
        <h1 className="flex flex-1 items-center pl-[13px] text-[#999]">learn_git</h1>
        <div className="absolute top-0 left-[562px] flex h-px w-[242px] justify-center bg-[#141414]">
          <span className="w-12 bg-[#3f9bf2]" />
        </div>
        <div className="flex h-[21px] items-center pr-0.5">
          <button type="button" aria-label="Minimize" className="flex w-[45px] justify-center"><Svg size={10}><path d="M0 5.500h10" stroke="#999" /></Svg></button>
          <button type="button" aria-label="Restore" className="flex w-[46px] justify-center">
            <Svg size={10}><path d="M.5 2.500h7v7h-7zM2.500 2.500v-2h7v7h-2" fill="none" stroke="#999" /></Svg>
          </button>
          <button type="button" aria-label="Close" className="flex w-[46px] justify-center"><Svg size={10}><path d="M0 0l10 10M10 0L0 10" stroke="#999" /></Svg></button>
        </div>
      </header>

      <nav aria-label="Ribbon tabs" className="flex h-[23px] items-stretch bg-black">
        <button type="button" className="w-14 bg-[#0063c4]">File</button>
        <button type="button" className="w-[58px] border-x border-t border-[#2b2b2b] bg-[#202020]">Home</button>
        <button type="button" className="w-[58px]">Share</button>
        <button type="button" className="w-[57px]">View</button>
        <button type="button" className="w-[97px] border-x border-[#1c1c1c]">Backup Tools</button>
        <div className="ml-auto flex items-center gap-2.5 pr-[3px]">
          <button type="button" aria-label="Collapse ribbon"><Svg size={10}><path d="M1 7l4-4 4 4" fill="none" stroke="#ccc" strokeWidth="2" /></Svg></button>
          <button type="button" aria-label="Help" className="flex size-4 items-center justify-center rounded-full bg-[#0a6cd0] text-[12px] font-bold">?</button>
        </div>
      </nav>

      <div className="flex h-[93px] border-y border-[#2c2c2c] bg-[#202020]">
        <Group label="Clipboard" width="w-[263px]">
          <div className="flex pl-1.5">
            <BigButton icon={<PinBig />} lines={['Pin to Quick', 'access']} width="w-[66px]" muted />
            <BigButton icon={<CopyBig />} lines={['Copy']} width="w-[42px]" />
            <BigButton icon={<PasteBig />} lines={['Paste']} width="w-[42px]" muted />
          </div>
          <Column>
            <SmallButton icon={<CutIcon />} label="Cut" />
            <SmallButton icon={<PathIcon />} label="Copy path" />
            <SmallButton icon={<PasteShortcutIcon />} label="Paste shortcut" muted />
          </Column>
        </Group>
        <Group label="Organize" width="w-[191px]">
          <div className="flex pl-[3px]">
            <BigButton icon={<MoveBig />} lines={['Move', 'to']} width="w-[42px]" caret />
            <BigButton icon={<CopyToBig />} lines={['Copy', 'to']} width="w-[42px]" caret />
            <div className="mt-2 ml-[5px] h-[56px] w-px bg-[#4c4c4c]" />
            <BigButton icon={<DeleteBig />} lines={['Delete']} width="w-[46px]" caret />
            <BigButton icon={<RenameBig />} lines={['Rename']} width="w-[42px]" />
          </div>
        </Group>
        <Group label="New" width="w-[145px]">
          <div className="flex pl-[3px]">
            <BigButton icon={<NewFolderBig />} lines={['New', 'folder']} width="w-[42px]" />
          </div>
          <Column>
            <SmallButton icon={<NewItemIcon />} label="New item" caret />
            <SmallButton icon={<EasyAccessIcon />} label="Easy access" caret />
          </Column>
        </Group>
        <Group label="Open" width="w-[133px]">
          <div className="flex pl-[3px]">
            <BigButton icon={<PropertiesBig />} lines={['Properties']} width="w-[57px]" caret />
          </div>
          <Column>
            <SmallButton icon={<NotepadIcon />} label="Open" caret />
            <SmallButton icon={<EditIcon />} label="Edit" />
            <SmallButton icon={<HistoryIcon />} label="History" />
          </Column>
        </Group>
        <Group label="Select" width="w-[115px]">
          <div className="pl-[3px]">
            <Column>
              <SmallButton icon={<SelectGrid filled cells={['on', 'on', 'on', 'on']} />} label="Select all" />
              <SmallButton icon={<SelectGrid cells={['off', 'off', 'off', 'off']} />} label="Select none" />
              <SmallButton icon={<SelectGrid cells={['off', 'on', 'on', 'off']} />} label="Invert selection" />
            </Column>
          </div>
        </Group>
      </div>

      <div className="flex h-[35px] items-center pr-3 pb-px">
        <div className="flex w-[106px] items-center pl-3">
          <button type="button" aria-label="Back"><Svg size={14}><path d="M1 7h12M6 2L1 7l5 5" fill="none" stroke="#8c8c8c" strokeWidth="1.700" /></Svg></button>
          <button type="button" aria-label="Forward" className="ml-4"><Svg size={14}><path d="M1 7h12M8 2l5 5-5 5" fill="none" stroke="#8c8c8c" strokeWidth="1.700" /></Svg></button>
          <button type="button" aria-label="Recent locations" className="ml-3"><Svg size={8}><path d="M1 2l3 3 3-3" className={chevron} strokeWidth="1.600" /></Svg></button>
          <button type="button" aria-label="Up" className="ml-2.5"><Svg size={14}><path d="M7 13V1.500M2 6.500l5-5 5 5" fill="none" stroke="#fff" strokeWidth="2" /></Svg></button>
        </div>
        <div className="flex h-[22px] flex-1 items-center border border-[#535353] pr-0.5 pl-0.5">
          <FolderIcon />
          <Svg size={8} className="ml-1.5"><path d="M2 1l3 3-3 3" className={chevron} strokeWidth="1.500" /></Svg>
          <button type="button" className="ml-[7px]">learn_git</button>
          <button type="button" aria-label="Previous locations" className="ml-auto"><Svg size={10}><path d="M1 3l4 4 4-4" className={chevron} strokeWidth="2" /></Svg></button>
          <button type="button" aria-label="Refresh" className="ml-1.5">
            <Svg size={12}><path d="M9.500 4a4.300 4.300 0 11-7.200.5" fill="none" stroke="#999" strokeWidth="1.600" /><path d="M3 1.500h4v4" fill="none" stroke="#999" strokeWidth="1.500" /></Svg>
          </button>
        </div>
        <label className="ml-3 flex h-[22px] w-[323px] items-center border border-[#535353] pr-2 pl-2">
          <span className="sr-only">Search</span>
          <input type="text" placeholder="Search learn_git" className="h-5 min-w-0 flex-1 bg-transparent outline-none placeholder:text-[#777]" />
          <Svg size={12}><circle cx="7.500" cy="4.500" r="3.300" fill="none" stroke="#a0a0a0" strokeWidth="1.500" /><path d="M5 7L.5 11.500" stroke="#a0a0a0" strokeWidth="1.800" /></Svg>
        </label>
      </div>

      <div className="flex flex-1">
        <aside className="w-[178px] shrink-0 pt-4">
          <nav aria-label="Folders" className="flex flex-col gap-2">
            {NAV.map((s) => (
              <div key={s.label}>
                <div className="flex h-6 items-center pr-[3px] pl-px">
                  <a href="#" className={`flex h-[22px] flex-1 items-center gap-[5px] pl-[23px] whitespace-nowrap ${s.current ? 'bg-[#333]' : ''}`}>
                    {s.icon}
                    {s.label}
                  </a>
                </div>
                {s.items.map((it) => (
                  <a key={it.label} href="#" className="flex h-6 items-center gap-[5px] pl-8 whitespace-nowrap">
                    {it.icon}
                    {it.label}
                  </a>
                ))}
              </div>
            ))}
          </nav>
        </aside>
        <main className="flex flex-1 flex-wrap content-start gap-6 border-l border-[#2b2b2b] bg-[#202020] pt-[7px] pl-4">
          {[
            { name: '.git', art: <GitFolderArt /> },
            { name: 'fourth.txt', art: <TextFileArt />, hovered: true },
            { name: 'third.txt', art: <TextFileArt /> },
          ].map((f) => (
            <button key={f.name} type="button" className={`flex w-[269px] flex-col items-center pt-px pr-px pb-px ${f.hovered ? 'bg-[#333]' : ''}`}>
              {f.art}
              <span>{f.name}</span>
            </button>
          ))}
        </main>
      </div>

      <footer className="flex h-[30px] items-stretch bg-[#222324]">
        <button type="button" aria-label="Start" className="flex w-9 items-center justify-center">
          <Svg><path d="M0 2.300L6.700 1.400v6.100H0zM7.500 1.300L16 0v7.500H7.500zM0 8.300h6.700v6.200L0 13.600zM7.500 8.300H16V16l-8.500-1.300z" fill="#fff" /></Svg>
        </button>
        <label className="flex w-[258px] items-center border border-[#5c5c5c] bg-[#333] pl-[11px]">
          <Svg><circle cx="10" cy="6" r="5" fill="none" stroke="#eee" strokeWidth="1.300" /><path d="M6.500 9.500L.5 15.500" stroke="#eee" strokeWidth="1.300" /></Svg>
          <input type="text" aria-label="Search" placeholder="Search" className="ml-3 min-w-0 flex-1 bg-transparent text-[14px] leading-5 outline-none placeholder:text-[#cfcfcf]" />
          <Moose />
        </label>
        <button type="button" aria-label="Task View" className="flex w-[38px] items-center pl-2.5">
          <Svg><path d="M.5 0v3.500h10V0M.5 16v-3.500h10V16M.5 5.500h10v5H.5zM14.500 0v4M14.500 9v7" fill="none" stroke="#f2f2f2" strokeWidth="1.200" /><path d="M13 5h3v3h-3z" fill="#fff" /></Svg>
        </button>
        {APPS.map((a) => (
          <AppButton key={a.name} {...a} />
        ))}
        <div className="ml-auto flex items-center pr-1">
          <button type="button" className="flex items-center gap-2 text-[13px] text-[#eee]">
            <svg width="24" height="16" viewBox="0 0 24 16" className="block" aria-hidden="true">
              <path d="M1 1h19v14H3q-2 0-2-2zM20 4h3v9q0 2-2 2h-2" fill="none" stroke="#eee" strokeWidth="1.500" />
              <path d="M4 4.500h13M11 8h6M11 11h6" stroke="#eee" strokeWidth="1.300" />
              <path d="M4.500 7.500h4v4h-4z" fill="none" stroke="#eee" strokeWidth="1.300" />
            </svg>
            30°C
          </button>
          <button type="button" aria-label="Show hidden icons" className="ml-5"><Svg size={12}><path d="M.5 8.500L6 3l5.500 5.500" fill="none" stroke="#eee" strokeWidth="1.300" /></Svg></button>
          <span className="ml-3">
            <Svg size={14}>
              <path d="M1 14C1 7 6 1.500 13 1.500" fill="none" stroke="#777" strokeWidth="1.300" />
              <path d="M4 14c0-5 4-9 9-9.500M7 14c0-3.500 2.500-6 6-6.500M10 14c0-2 1-3 3-3.500" fill="none" stroke="#ddd" strokeWidth="1.200" />
              <path d="M11 12h2v2h-2z" fill="#fff" />
            </Svg>
          </span>
          <span className="ml-2.5">
            <Svg size={14}>
              <path d="M2 4.500h6.500v6H2zM8.500 6.500l3-1.500v5l-3-1.500" fill="none" stroke="#eee" strokeWidth="1.200" />
              <path d="M3 2c2-1.700 5-1.700 7 0M3 13c2 1.500 5 1.500 7 0" fill="none" stroke="#ccc" strokeWidth="1.100" />
            </Svg>
          </span>
          <span className="ml-2">
            <Svg><path d="M.7 3.700h12.600v8H.7z" fill="none" stroke="#eee" strokeWidth="1.300" /><path d="M2.500 5.500h5v4.500h-5zM14 6h1.500v3.500H14z" fill="#eee" /></Svg>
          </span>
          <span className="ml-1.5">
            <Svg><path d="M.5 6h2.500l3-3v10l-3-3H.5z" fill="none" stroke="#eee" strokeWidth="1.200" /><path d="M9.500 5.500l5 5M14.500 5.500l-5 5" stroke="#eee" strokeWidth="1.200" /></Svg>
          </span>
          <span className="ml-2.5">ENG</span>
          <time className="ml-3.5">22:52</time>
          <button type="button" aria-label="Notifications" className="ml-[18px]">
            <Svg>
              <path d="M0 0h16v12h-5l-3 3v-3H0z" fill="#fff" />
              <path d="M2.500 3.500h11M2.500 6.500h11M2.500 9.500h6" stroke="#222" />
              <circle cx="12.500" cy="12.500" r="3.500" fill="#222324" />
              <path d="M10.500 13a2.500 2.500 0 104-3 4 4 0 01-4 3z" fill="none" stroke="#fff" />
            </Svg>
          </button>
          <span className="ml-5 h-[30px] w-px bg-[#777]" />
        </div>
      </footer>
    </div>
  );
}
